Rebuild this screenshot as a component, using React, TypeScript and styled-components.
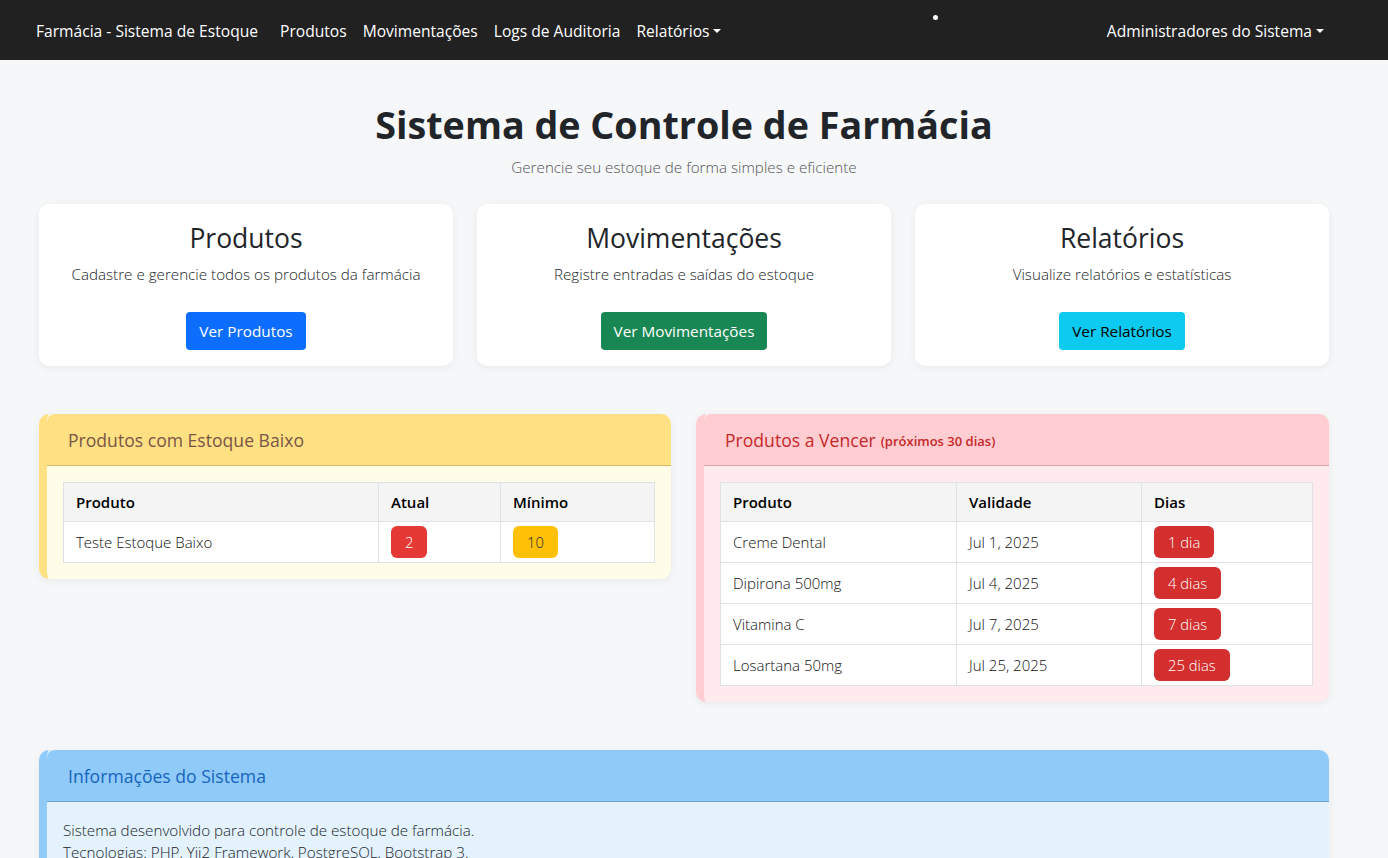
import React from 'react';
import styled, {createGlobalStyle} from 'styled-components';

const GlobalStyle = createGlobalStyle`
    body {
        margin: 0;
        background: #f6f7f9;
        font-family: "Open Sans", "Noto Sans", sans-serif;
        color: #212529;
    }
    * {
        box-sizing: border-box;
    }
`;

type Tone = 'warning' | 'danger' | 'info';

const tones: Record<Tone, {head: string; body: string; text: string; line: string}> = {
    warning: {head: '#ffe082', body: '#fffde7', text: '#795548', line: '#d8b869'},
    danger: {head: '#ffcdd2', body: '#ffebee', text: '#c62828', line: '#d9a5aa'},
    info: {head: '#90caf9', body: '#e3f2fd', text: '#1565c0', line: '#6fa3d1'},
};

const lowStock = [{name: 'Teste Estoque Baixo', current: 2, min: 10}];

const expiring = [
    {name: 'Creme Dental', date: 'Jul 1, 2025', days: '1 dia'},
    {name: 'Dipirona 500mg', date: 'Jul 4, 2025', days: '4 dias'},
    {name: 'Vitamina C', date: 'Jul 7, 2025', days: '7 dias'},
    {name: 'Losartana 50mg', date: 'Jul 25, 2025', days: '25 dias'},
];

const shortcuts = [
    {title: 'Produtos', text: 'Cadastre e gerencie todos os produtos da farmácia', label: 'Ver Produtos', variant: 'primary' as const},
    {title: 'Movimentações', text: 'Registre entradas e saídas do estoque', label: 'Ver Movimentações', variant: 'success' as const},
    {title: 'Relatórios', text: 'Visualize relatórios e estatísticas', label: 'Ver Relatórios', variant: 'info' as const},
];

const Caret = () => <CaretMark />;

export default function App() {
    return (
        <>
            <GlobalStyle />
            <Navbar>
                <Brand>Farmácia - Sistema de Estoque</Brand>
                <NavList>
                    <NavItem>Produtos</NavItem>
                    <NavItem>Movimentações</NavItem>
                    <NavItem>Logs de Auditoria</NavItem>
                    <NavItem>Relatórios<Caret /></NavItem>
                </NavList>
                <Dot />
                <UserMenu>Administradores do Sistema<Caret /></UserMenu>
            </Navbar>

            <Main>
                <Hero>
                    <HeroTitle>Sistema de Controle de Farmácia</HeroTitle>
                    <HeroLead>Gerencie seu estoque de forma simples e eficiente</HeroLead>
                </Hero>

                <CardGrid>
                    {shortcuts.map((s) => (
                        <ShortcutCard key={s.title}>
                            <CardTitle>{s.title}</CardTitle>
                            <CardText>{s.text}</CardText>
                            <ActionButton $variant={s.variant}>{s.label}</ActionButton>
                        </ShortcutCard>
                    ))}
                </CardGrid>

                <PanelRow>
                    <Panel $tone='warning'>
                        <PanelHeader $tone='warning'>Produtos com Estoque Baixo</PanelHeader>
                        <PanelBody>
                            <DataTable>
                                <colgroup>
                                    <col style={{width: 315}} />
                                    <col style={{width: 122}} />
                                    <col />
                                </colgroup>
                                <thead>
                                    <tr>
                                        <Th>Produto</Th>
                                        <Th>Atual</Th>
                                        <Th>Mínimo</Th>
                                    </tr>
                                </thead>
                                <tbody>
                                    {lowStock.map((p) => (
                                        <tr key={p.name}>
                                            <Td>{p.name}</Td>
                                            <Td><Badge $color='#e53935'>{p.current}</Badge></Td>
                                            <Td><Badge $color='#ffc107' $dark>{p.min}</Badge></Td>
                                        </tr>
                                    ))}
                                </tbody>
                            </DataTable>
                        </PanelBody>
                    </Panel>

                    <Panel $tone='danger'>
                        <PanelHeader $tone='danger'>
                            Produtos a Vencer <Small>(próximos 30 dias)</Small>
                        </PanelHeader>
                        <PanelBody>
                            <DataTable>
                                <colgroup>
                                    <col style={{width: 236}} />
                                    <col style={{width: 185}} />
                                    <col />
                                </colgroup>
                                <thead>
                                    <tr>
                                        <Th>Produto</Th>
                                        <Th>Validade</Th>
                                        <Th>Dias</Th>
                                    </tr>
                                </thead>
                                <tbody>
                                    {expiring.map((p) => (
                                        <tr key={p.name}>
                                            <Td>{p.name}</Td>
                                            <Td>{p.date}</Td>
                                            <Td><Badge $color='#d32f2f'>{p.days}</Badge></Td>
                                        </tr>
                                    ))}
                                </tbody>
                            </DataTable>
                        </PanelBody>
                    </Panel>
                </PanelRow>

                <InfoPanel $tone='info'>
                    <PanelHeader $tone='info'>Informações do Sistema</PanelHeader>
                    <InfoBody>
                        <InfoLine>Sistema desenvolvido para controle de estoque de farmácia.</InfoLine>
                        <InfoLine>Tecnologias: PHP, Yii2 Framework, PostgreSQL, Bootstrap 3.</InfoLine>
                    </InfoBody>
                </InfoPanel>
            </Main>
        </>
    );
}

const Navbar = styled.nav`
    height: 60px;
    background: #212121;
    display: flex;
    align-items: center;
    padding: 1px 64px 0 36px;
    color: #fff;
    font-size: 15.6px;
    font-weight: 500;
    position: relative;
`;

const Brand = styled.div`
    margin-right: 22px;
    white-space: nowrap;
`;

const NavList = styled.div`
    display: flex;
    gap: 16px;
`;

const NavItem = styled.div`
    display: flex;
    align-items: center;
    white-space: nowrap;
`;

const CaretMark = styled.span`
    display: inline-block;
    margin-left: 4px;
    width: 0;
    height: 0;
    border-left: 4px solid transparent;
    border-right: 4px solid transparent;
    border-top: 4px solid #fff;
`;

const Dot = styled.span`
    position: absolute;
    left: 933px;
    top: 15px;
    width: 5px;
    height: 5px;
    border-radius: 50%;
    background: #fff;
`;

const UserMenu = styled(NavItem)`
    margin-left: auto;
`;

const Main = styled.main`
    width: 1290px;
    margin-left: 39px;
    padding-bottom: 40px;
`;

const Hero = styled.header`
    text-align: center;
    padding-top: 40px;
`;

const HeroTitle = styled.h1`
    margin: 0;
    font-size: 37.7px;
    line-height: 50px;
    font-weight: 700;
    color: #212529;
`;

const HeroLead = styled.p`
    margin: 7px 0 0;
    font-size: 15.2px;
    font-weight: 300;
    color: #555;
`;

const CardGrid = styled.section`
    display: grid;
    grid-template-columns: repeat(3, 1fr);
    gap: 24px;
    margin-top: 27px;
`;

const ShortcutCard = styled.div`
    background: #fff;
    border-radius: 10px;
    box-shadow: 0 2px 8px rgba(0, 0, 0, 0.06);
    height: 162px;
    display: flex;
    flex-direction: column;
    align-items: center;
    padding-top: 18px;
`;

const CardTitle = styled.h2`
    margin: 0;
    font-size: 26.5px;
    line-height: 32px;
    font-weight: 500;
`;

const CardText = styled.p`
    margin: 10px 0 0;
    font-size: 15.2px;
    font-weight: 300;
`;

const buttonColors = {
    primary: {bg: '#0d6efd', fg: '#fff'},
    success: {bg: '#198754', fg: '#fff'},
    info: {bg: '#0dcaf0', fg: '#000'},
};

const ActionButton = styled.button<{$variant: keyof typeof buttonColors}>`
    margin-top: 28px;
    height: 38px;
    padding: 0 13px;
    border: none;
    border-radius: 4px;
    font-family: inherit;
    font-size: 15.3px;
    font-weight: 500;
    background: ${(p) => buttonColors[p.$variant].bg};
    color: ${(p) => buttonColors[p.$variant].fg};
`;

const PanelRow = styled.section`
    display: grid;
    grid-template-columns: 632px 633px;
    gap: 25px;
    align-items: start;
    margin-top: 48px;
`;

const Panel = styled.div<{$tone: Tone}>`
    border-radius: 10px;
    border-left: 8px solid ${(p) => tones[p.$tone].head};
    background: ${(p) => tones[p.$tone].body};
    box-shadow: 0 2px 8px rgba(0, 0, 0, 0.06);
    overflow: hidden;
`;

const PanelHeader = styled.div<{$tone: Tone}>`
    height: 52px;
    display: flex;
    align-items: center;
    gap: 5px;
    padding: 0 21px;
    background: ${(p) => tones[p.$tone].head};
    color: ${(p) => tones[p.$tone].text};
    border-bottom: 1px solid ${(p) => tones[p.$tone].line};
    border-top-left-radius: 8px;
    font-size: 17.6px;
    font-weight: 500;
`;

const Small = styled.small`
    font-size: 13px;
    font-weight: 600;
    padding-top: 3px;
`;

const PanelBody = styled.div`
    padding: 16px;
`;

const DataTable = styled.table`
    width: 100%;
    border-collapse: collapse;
    table-layout: fixed;
    background: #fff;
    font-size: 15px;
`;

const Th = styled.th`
    text-align: left;
    height: 39px;
    padding: 0 12px;
    background: #f4f4f4;
    border: 1px solid #dee2e6;
    font-weight: 600;
    color: #000;
`;

const Td = styled.td`
    height: 41px;
    padding: 0 12px;
    border: 1px solid #dee2e6;
    font-weight: 300;
    color: #111;
`;

const Badge = styled.span<{$color: string; $dark?: boolean}>`
    display: inline-flex;
    align-items: center;
    height: 32px;
    padding: 0 14px;
    border-radius: 6px;
    background: ${(p) => p.$color};
    color: ${(p) => (p.$dark ? '#212529' : '#fff')};
    font-size: 14.8px;
    font-weight: 300;
`;

const InfoPanel = styled(Panel)`
    margin-top: 48px;
`;

const InfoBody = styled.div`
    padding: 17px 16px 16px;
`;

const InfoLine = styled.p`
    margin: 0;
    font-size: 15.2px;
    line-height: 22px;
    font-weight: 300;
`;
